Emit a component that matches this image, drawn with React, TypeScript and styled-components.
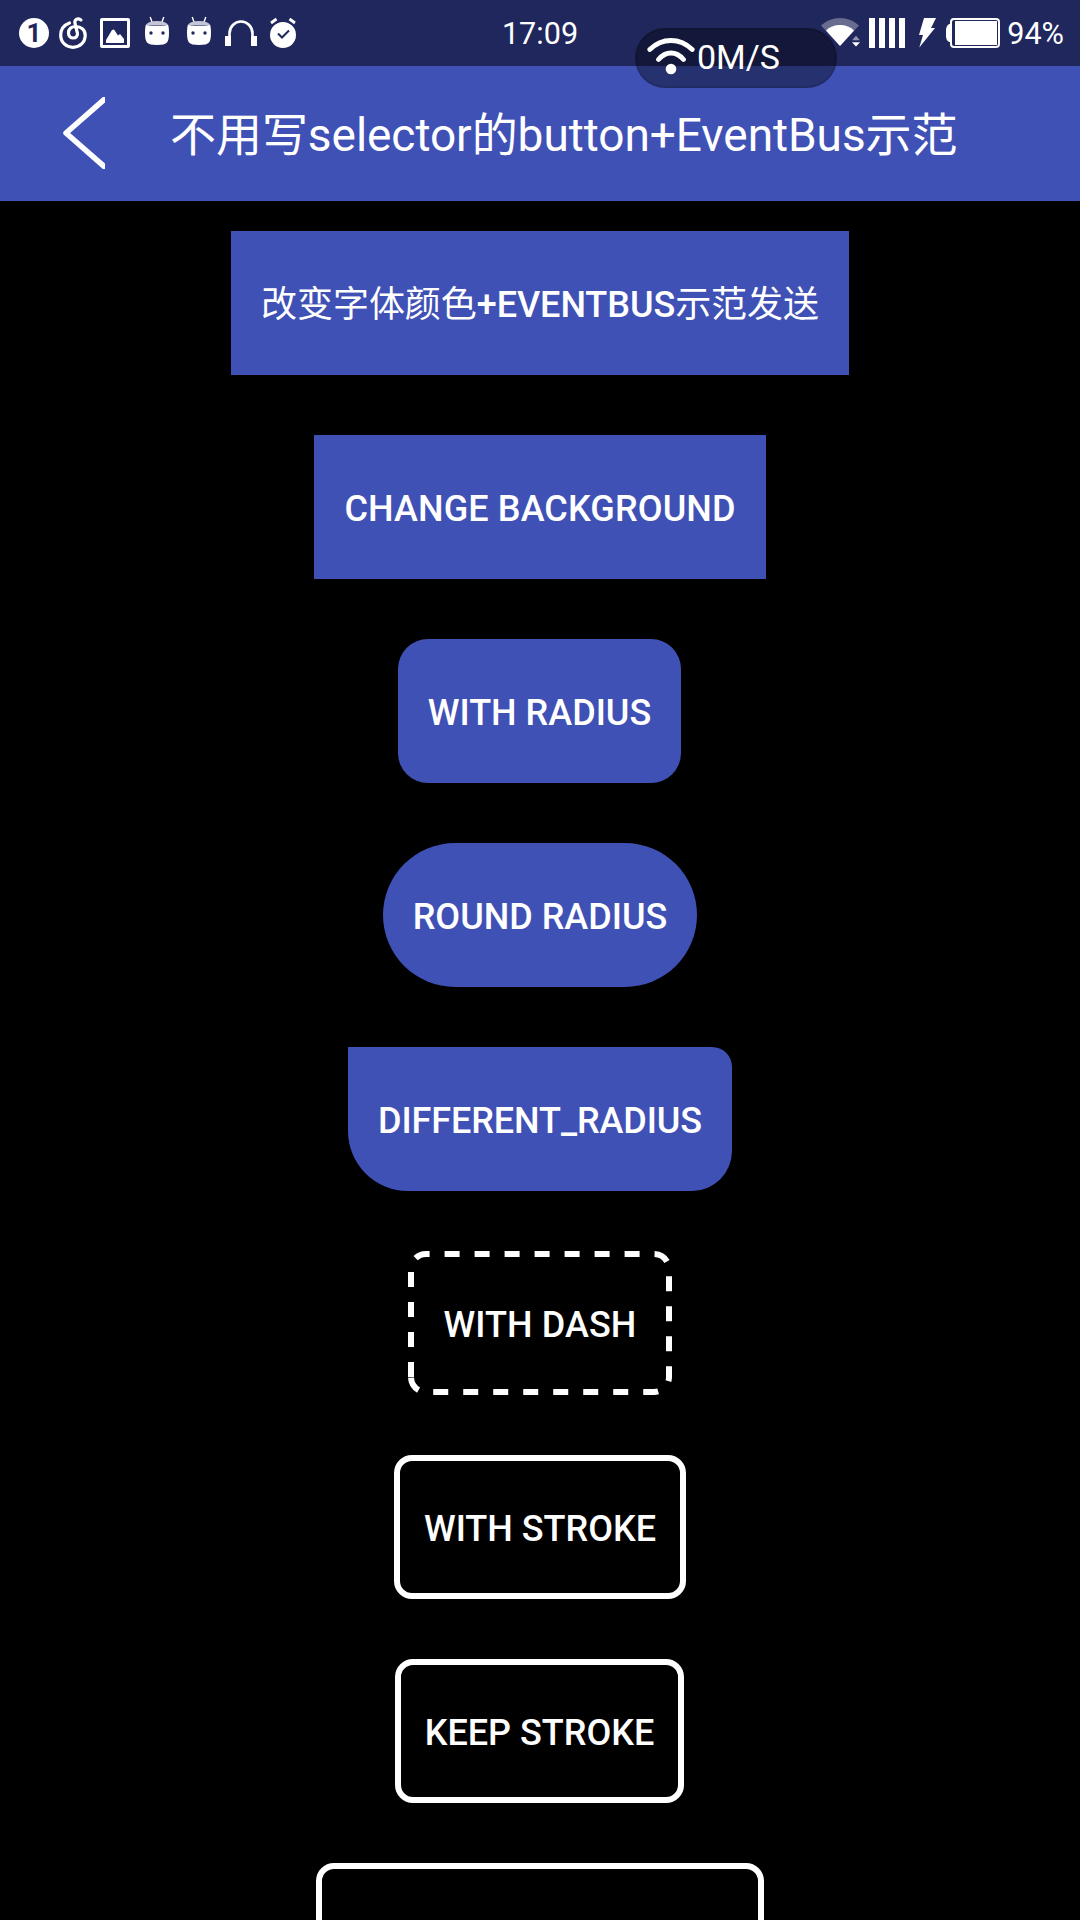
import React from "react";
import styled, { createGlobalStyle } from "styled-components";

const GlobalStyle = createGlobalStyle`
  html, body { margin: 0; padding: 0; background: #000; }
  * { box-sizing: border-box; }
`;

const Screen = styled.div`
  position: relative;
  display: flex;
  flex-direction: column;
  width: 1080px;
  height: 1920px;
  overflow: hidden;
  background: #000;
  color: #fff;
  font-family: Roboto, "Noto Sans CJK SC", sans-serif;
`;

const StatusBar = styled.header`
  display: grid;
  grid-template-columns: 1fr auto 1fr;
  flex: none;
  height: 66px;
  padding: 0 16px 0 19px;
  background: #1f275d;
`;

const StatusGroup = styled.div<{ $end?: boolean }>`
  display: flex;
  align-items: flex-start;
  justify-content: ${(p) => (p.$end ? "flex-end" : "flex-start")};
  padding-top: 15px;
`;

const StatusIcon = styled.svg<{ $gap?: number }>`
  display: block;
  flex: none;
  height: 36px;
  margin-left: ${(p) => p.$gap ?? 0}px;
  overflow: visible;
`;

const CountBadge = styled.span`
  display: flex;
  align-items: center;
  justify-content: center;
  width: 30px;
  height: 30px;
  margin-top: 3px;
  border-radius: 50%;
  background: #fff;
  color: #1f275d;
  font-size: 26px;
  font-weight: 700;
  line-height: 30px;
`;

const StatusText = styled.span<{ $gap?: number }>`
  margin-left: ${(p) => p.$gap ?? 0}px;
  font-size: 30.6px;
  line-height: 37px;
  white-space: nowrap;
`;

const Clock = styled(StatusText)`
  padding: 15px 3px 0 0;
`;

const SpeedPill = styled.div`
  position: absolute;
  left: 635px;
  top: 28px;
  display: flex;
  align-items: center;
  gap: 2px;
  width: 202px;
  height: 60px;
  padding: 0 0 2px 10px;
  border: 2px solid rgba(0, 0, 0, 0.1);
  border-radius: 30px;
  background: rgba(0, 0, 0, 0.39);
  font-size: 34px;
  line-height: 40px;
`;

const TitleBar = styled.nav`
  display: flex;
  align-items: center;
  flex: none;
  height: 135px;
  padding-left: 63px;
  background: #3f51b5;
`;

const BackIcon = styled.svg`
  display: block;
  width: 42px;
  height: 72px;
  margin-bottom: 1px;
`;

const Title = styled.h1`
  margin: 2px 0 0 65px;
  font-size: 46px;
  font-weight: 400;
  letter-spacing: -0.05px;
  line-height: 60px;
  white-space: nowrap;
`;

const ButtonList = styled.main`
  display: flex;
  flex-direction: column;
  align-items: center;
  gap: 60px;
  padding-top: 30px;
`;

type Look = "solid" | "stroke" | "dash";

const DemoButton = styled.button<{ $width: number; $look: Look; $radius: string; $tracking?: number }>`
  position: relative;
  display: flex;
  flex: none;
  align-items: center;
  justify-content: center;
  width: ${(p) => p.$width}px;
  height: 144px;
  margin: 0 ${(p) => p.$width % 2}px 0 0;
  padding: 3px 0 0;
  border: ${(p) => (p.$look === "stroke" ? "6px solid #fff" : "0")};
  border-radius: ${(p) => p.$radius};
  background: ${(p) => (p.$look === "solid" ? "#3f51b5" : "transparent")};
  color: #fff;
  font-family: inherit;
  font-size: 36px;
  font-weight: 500;
  letter-spacing: ${(p) => p.$tracking ?? 0}px;
  line-height: 42px;
  text-transform: uppercase;
  white-space: nowrap;
`;

const Light = styled.span`
  font-weight: 400;
`;

const DashOutline = styled.svg`
  position: absolute;
  inset: 0;
  width: 100%;
  height: 100%;
`;

const Robot = ({ gap }: { gap: number }) => (
  <StatusIcon $gap={gap} width="24" viewBox="0 0 24 36">
    <path d="M5.2 2l1.8 5M18.8 2L17 7" stroke="#fff" strokeWidth="1.4" />
    <path d="M1 10.5Q2 6 12 6t11 4.5z" fill="#c3c5d6" />
    <path
      fillRule="evenodd"
      fill="#fff"
      d="M1 9.5Q3 11 12 11T23 9.500Q24 12 24 18 24 25 22 27.500 20 30 12 30T2 27.500Q0 25 0 18 0 12 1 9.500zM6 16.300a1.700 1.700 0 100 3.400 1.700 1.700 0 000-3.400zM18 16.300a1.700 1.700 0 100 3.400 1.700 1.700 0 000-3.400z"
    />
  </StatusIcon>
);

interface ButtonSpec {
  label: React.ReactNode;
  width: number;
  look: Look;
  radius: string;
  tracking?: number;
}

const buttons: ButtonSpec[] = [
  {
    label: (
      <span>
        <Light>改变字体颜色</Light>+EventBus<Light>示范发送</Light>
      </span>
    ),
    width: 618,
    look: "solid",
    radius: "0",
    tracking: -0.06,
  },
  { label: "change background", width: 452, look: "solid", radius: "0", tracking: 0.12 },
  { label: "with radius", width: 283, look: "solid", radius: "30px" },
  { label: "round radius", width: 314, look: "solid", radius: "72px" },
  { label: "different_radius", width: 384, look: "solid", radius: "0 20px 40px 60px", tracking: -0.08 },
  { label: "with dash", width: 264, look: "dash", radius: "18px", tracking: 0.1 },
  { label: "with stroke", width: 292, look: "stroke", radius: "18px" },
  { label: "keep stroke", width: 289, look: "stroke", radius: "18px" },
  { label: "", width: 448, look: "stroke", radius: "18px" },
];

export default function App() {
  return (
    <Screen>
      <GlobalStyle />
      <StatusBar>
        <StatusGroup>
          <CountBadge>1</CountBadge>
          <StatusIcon $gap={10} width="28" viewBox="0 0 28 36">
            <path
              d="M10.500 8C5 10 1.700 14.800 1.700 20.300c0 7 5.500 12 12.300 12s12.200-5 12.200-12c0-5.200-4-8.800-9.400-8.800-4.700 0-7.300 2.500-7.300 6.500 0 3 2 5 4.700 5s4.800-2 4.200-5L16 8.500C15.200 4.300 18.500 2.800 22 5"
              fill="none"
              stroke="#fff"
              strokeWidth="3.200"
              strokeLinecap="round"
            />
          </StatusIcon>
          <StatusIcon $gap={13} width="30" viewBox="0 0 30 36">
            <rect x="1.500" y="4.500" width="27" height="27" rx=".5" fill="none" stroke="#fff" strokeWidth="3" />
            <path d="M6 28v-3l6-10 2-.5 4 6 2-1.500 4 5v4z" fill="#fff" />
          </StatusIcon>
          <Robot gap={15} />
          <Robot gap={18} />
          <StatusIcon $gap={14} width="32" viewBox="0 0 32 36">
            <path d="M4.500 22V18.500a11.500 12 0 0123 0V22" fill="none" stroke="#fff" strokeWidth="2.600" />
            <path d="M0 21h6v10H0zM26 21h6v10h-6z" fill="#fff" />
          </StatusIcon>
          <StatusIcon $gap={13} width="26" viewBox="0 0 26 36">
            <circle cx="13" cy="20" r="13" fill="#fff" />
            <path d="M1 8l5.500-4M25 8l-5.500-4" stroke="#fff" strokeWidth="2.800" />
            <path d="M8 18.500l4 4 7-7" fill="none" stroke="#1f275d" strokeWidth="2" />
          </StatusIcon>
        </StatusGroup>
        <Clock>17:09</Clock>
        <StatusGroup $end>
          <StatusIcon width="39" viewBox="0 0 39 36">
            <path d="M19 31L0 10.500Q8 3 19 3t19 7.500z" fill="#686c91" />
            <path d="M19 31L5 15.500Q10.500 10 19 10t14 5.500z" fill="#fff" />
            <path d="M31 25.200l4-4.400 4 4.400z" fill="#9295ae" />
            <path d="M31 27.200l4 4.300 4-4.300z" fill="#fff" />
          </StatusIcon>
          <StatusIcon $gap={9} width="36" viewBox="0 0 36 36">
            <path d="M0 3h6v30H0zM10 3h6v30h-6zM20 3h6v30h-6zM30 3h6v30h-6z" fill="#fff" />
          </StatusIcon>
          <StatusIcon $gap={14} width="17" viewBox="0 0 17 36">
            <path d="M5 3h12l-5 10h4L.3 32.500 4 20H0z" fill="#fff" />
          </StatusIcon>
          <StatusIcon $gap={10} width="54" viewBox="0 0 54 36">
            <path d="M5 9H3Q0 11 0 14v8q0 3 3 5h2z" fill="#fff" />
            <rect x="5" y="4" width="48" height="28" rx="3" fill="none" stroke="#fff" strokeWidth="2" />
            <rect x="9" y="6" width="42" height="24" fill="#fff" />
          </StatusIcon>
          <StatusText $gap={7}>94%</StatusText>
        </StatusGroup>
      </StatusBar>
      <TitleBar>
        <BackIcon viewBox="0 0 42 72">
          <path d="M44 0L3 36 44 72" fill="none" stroke="#fff" strokeWidth="5.500" strokeLinejoin="round" />
        </BackIcon>
        <Title>不用写selector的button+EventBus示范</Title>
      </TitleBar>
      <ButtonList>
        {buttons.map((b, i) => (
          <DemoButton key={i} $width={b.width} $look={b.look} $radius={b.radius} $tracking={b.tracking}>
            {b.label}
            {b.look === "dash" && (
              <DashOutline viewBox="0 0 264 144">
                <path
                  d="M3 126V18A15 15 0 0118 3H246A15 15 0 01261 18V126A15 15 0 01246 141H18A15 15 0 013 126"
                  fill="none"
                  stroke="#fff"
                  strokeWidth="6"
                  strokeDasharray="15 15"
                />
              </DashOutline>
            )}
          </DemoButton>
        ))}
      </ButtonList>
      <SpeedPill>
        <svg width="48" height="38" viewBox="0 0 48 38">
          <path
            d="M2.800 11.500Q12 2.500 24 2.500t21.200 9M11.500 21.500Q17 15 24 15t12.500 6.500"
            fill="none"
            stroke="#fff"
            strokeWidth="4.800"
            strokeLinecap="round"
          />
          <circle cx="24" cy="31" r="5.300" fill="#fff" />
        </svg>
        <span>0M/S</span>
      </SpeedPill>
    </Screen>
  );
}
